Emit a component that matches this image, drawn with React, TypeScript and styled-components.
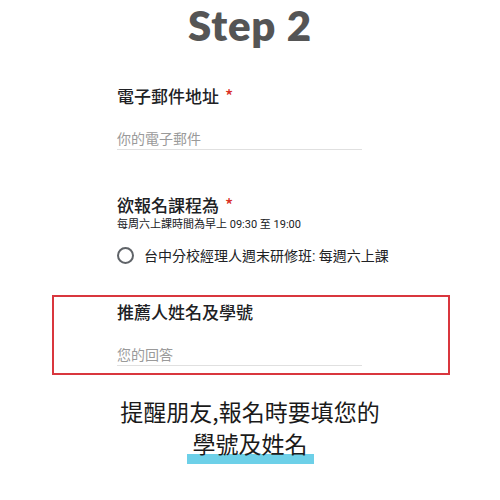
import styled, { createGlobalStyle } from "styled-components";

const GlobalStyle = createGlobalStyle`
    *, *::before, *::after {
        box-sizing: border-box;
    }
    html, body {
        margin: 0;
        padding: 0;
        background: #ffffff;
    }
    body {
        font-family: Roboto, "Noto Sans CJK TC", sans-serif;
        color: #202124;
    }
`;

const Page = styled.main`
    width: 500px;
    height: 500px;
    overflow: hidden;
    display: flex;
    flex-direction: column;
`;

const Title = styled.h1`
    margin: 0;
    height: 50px;
    line-height: 50px;
    text-align: center;
    font-family: Lato, "Open Sans", sans-serif;
    font-weight: 800;
    font-size: 42px;
    color: #555555;
    letter-spacing: 0.8px;
`;

const Question = styled.section<{ $top: number }>`
    margin-top: ${(p) => p.$top}px;
    padding-left: 117px;
    width: 362px;
`;

const Highlight = styled.div`
    margin: 28px 0 0 52px;
    width: 398px;
    height: 80px;
    border: 2px solid #d9363e;
    padding-left: 63px;
`;

const Inner = styled.div`
    width: 245px;
    padding-top: 3px;
`;

const Label = styled.div`
    font-family: "Noto Sans CJK TC", sans-serif;
    font-size: 17px;
    font-weight: 500;
    line-height: 24px;
    color: #202124;
`;

const Star = styled.span`
    color: #d93025;
    margin-left: 6px;
`;

const Hint = styled.div`
    font-family: Roboto, "Noto Sans CJK TC", sans-serif;
    font-size: 11px;
    line-height: 14px;
    color: #202124;
    margin-top: 1px;
`;

const Answer = styled.div<{ $gap: number }>`
    margin-top: ${(p) => p.$gap}px;
    font-family: "Noto Sans CJK TC", sans-serif;
    font-size: 14px;
    line-height: 20px;
    color: #9a9a9a;
    padding-bottom: 1px;
    border-bottom: 1px solid #e0e0e0;
`;

const Option = styled.label`
    margin-top: 11px;
    display: flex;
    align-items: center;
    gap: 10px;
    height: 24px;
    white-space: nowrap;
    font-family: Roboto, "Noto Sans CJK TC", sans-serif;
    font-size: 14px;
    color: #202124;
`;

const Radio = styled.span`
    flex: none;
    width: 17px;
    height: 17px;
    border: 2px solid #5f6368;
    border-radius: 50%;
`;

const Note = styled.div`
    margin-top: 20px;
    text-align: center;
    font-family: "Noto Sans CJK TC", sans-serif;
    font-size: 23px;
    line-height: 32px;
    color: #1a1a1a;
`;

const Marked = styled.span`
    display: inline-block;
    padding: 0 6px;
    line-height: 22px;
    border-bottom: 10px solid #6dd0e8;
`;

const App = () => {
    return (
        <Page>
            <GlobalStyle />
            <Title>Step 2</Title>

            <Question $top={34}>
                <Label>
                    電子郵件地址<Star>*</Star>
                </Label>
                <Answer $gap={20}>你的電子郵件</Answer>
            </Question>

            <Question $top={43}>
                <Label>
                    欲報名課程為<Star>*</Star>
                </Label>
                <Hint>每周六上課時間為早上 09:30 至 19:00</Hint>
                <Option>
                    <Radio />
                    台中分校經理人週末研修班: 每週六上課
                </Option>
            </Question>

            <Highlight>
                <Inner>
                    <Label>推薦人姓名及學號</Label>
                    <Answer $gap={20}>您的回答</Answer>
                </Inner>
            </Highlight>

            <Note>
                提醒朋友,報名時要填您的
                <br />
                <Marked>學號及姓名</Marked>
            </Note>
        </Page>
    );
};

export default App;
